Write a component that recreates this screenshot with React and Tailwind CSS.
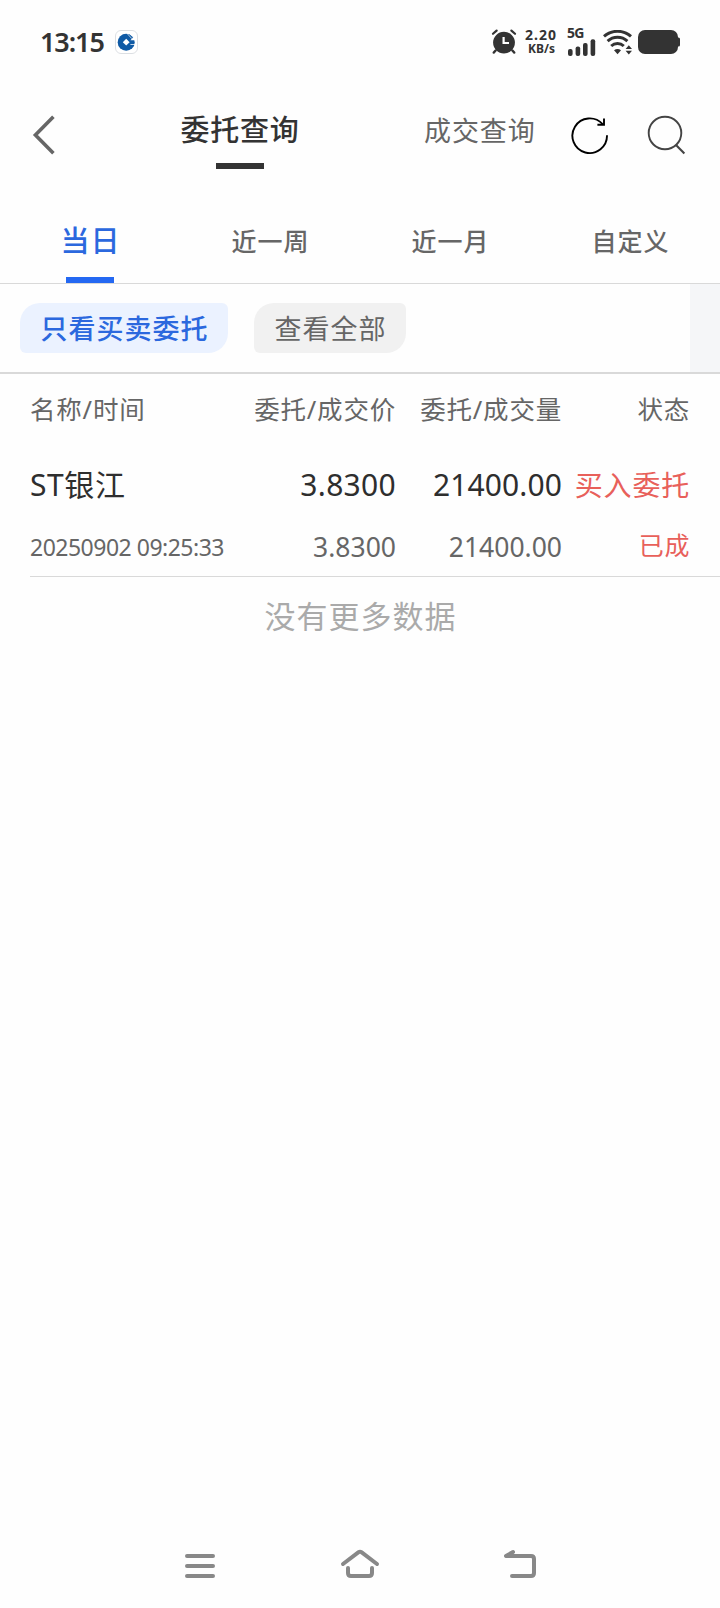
import React from "react";

const tabs = ["当日", "近一周", "近一月", "自定义"];

const orders = [
  {
    id: 1,
    name: "ST银江",
    time: "20250902 09:25:33",
    price: "3.8300",
    dealPrice: "3.8300",
    amount: "21400.00",
    dealAmount: "21400.00",
    type: "买入委托",
    status: "已成",
  },
];

const BankIcon = () => (
  <svg width="24" height="24" viewBox="0 0 24 24" fill="none" className="ml-[11px]">
    <rect x="0.5" y="0.5" width="22" height="23" rx="5.5" fill="#fff" stroke="#dcdfe3" />
    <circle cx="11.2" cy="12.2" r="8.5" fill="#0f5aa5" />
    <path d="M11.2 8.8L14.6 12.2L11.2 15.6L7.8 12.2Z" fill="#fff" />
    <path d="M12 3.4L17 8.8M14.6 3.6L18.6 7.8" stroke="#fff" strokeWidth="0.7" />
    <path d="M15.4 10.2L18.4 7.2L20.6 10.2Z" fill="#fff" />
    <path d="M15 14H20.4L19.8 14.8H15.8Z" fill="#fff" />
  </svg>
);

const AlarmIcon = () => (
  <svg width="26" height="26" viewBox="0 0 26 26" fill="none" stroke="#333" strokeLinecap="round">
    <circle cx="13" cy="13.6" r="10.9" fill="#333" stroke="none" />
    <path d="M2 4.8L5.6 1.6M24 4.8L20.4 1.6" strokeWidth="2.2" />
    <path d="M4.6 21.4L2.8 23.6M21.4 21.4L23.2 23.6" strokeWidth="2.4" />
    <path d="M12.6 8V14H18" stroke="#fff" strokeWidth="2.2" strokeLinecap="butt" />
  </svg>
);

const SignalIcon = () => (
  <svg width="28" height="17" viewBox="0 0 28 17" fill="#333">
    <rect x="0" y="10" width="4.6" height="7" rx="2" />
    <rect x="7.6" y="7.4" width="4.6" height="9.6" rx="2" />
    <rect x="15" y="4" width="4.6" height="13" rx="2" />
    <rect x="22.6" y="0.3" width="4.6" height="16.7" rx="2" />
  </svg>
);

const WifiIcon = () => (
  <svg width="30" height="25" viewBox="0 0 30 25" fill="none" stroke="#333" strokeWidth="3">
    <path d="M1 6.4A20.4 20.4 0 0 1 28 6.4" />
    <path d="M4.6 11.2A14.6 14.6 0 0 1 24.4 11.2" />
    <path d="M8.2 16A9.4 9.4 0 0 1 20.8 16" />
    <path d="M11 20.2Q14.5 17.6 18 20.2L14.5 24.2Z" fill="#333" stroke="none" />
    <path d="M25.8 15.2L29 19H22.6ZM25.8 24.6L29 20.8H22.6Z" fill="#333" stroke="none" />
  </svg>
);

const BatteryIcon = () => (
  <svg width="43" height="24" viewBox="0 0 43 24" fill="#333">
    <rect x="0" y="0" width="40" height="24" rx="7" />
    <rect x="38" y="7.5" width="4" height="9" rx="1.5" />
  </svg>
);

const StatusBar = () => (
  <div className="flex h-[84px] items-center px-10">
    <span className="w-[64px] whitespace-nowrap pb-[2px] text-[27px] font-semibold leading-none tracking-[-1.1px] text-[#333]">
      13:15
    </span>
    <BankIcon />
    <div className="ml-auto flex items-center">
      <AlarmIcon />
      <div className="ml-[7px] flex w-[34px] flex-col items-center font-bold text-[#333]">
        <span className="text-[14px] leading-[14px] tracking-[1px]">2.20</span>
        <span className="pl-px text-[12px] leading-[14px]">KB/s</span>
      </div>
      <div className="ml-[10px] flex w-[28px] flex-col">
        <span className="-ml-px mb-[2px] text-[14px] font-bold leading-[9px] tracking-[-0.8px] text-[#333]">5G</span>
        <SignalIcon />
      </div>
      <div className="ml-[7px]">
        <WifiIcon />
      </div>
      <div className="ml-[5px] -mr-px">
        <BatteryIcon />
      </div>
    </div>
  </div>
);

const Header = () => (
  <div className="flex h-[110px] items-start">
    <button aria-label="返回" className="ml-8 mt-[31px]">
      <svg width="24" height="40" viewBox="0 0 24 40" fill="none" stroke="#666" strokeWidth="3.6">
        <path d="M21.4 1.8L3.4 20L21.4 38.2" />
      </svg>
    </button>
    <div className="-mr-[2px] ml-[64px] mt-[26px] flex w-[240px] flex-col items-center">
      <span className="text-[29px] font-medium leading-10 tracking-[0.8px] text-[#333]">委托查询</span>
      <span className="mt-[13px] h-[6px] w-12 bg-[#333]" />
    </div>
    <div className="ml-[66px] mt-[27px] w-[112px] whitespace-nowrap text-[27px] leading-10 tracking-[0.9px] text-[#666]">
      成交查询
    </div>
    <button aria-label="刷新" className="ml-[35px] mt-[32px]">
      <svg width="40" height="40" viewBox="0 0 40 40" fill="none" stroke="#000" strokeWidth="1.9">
        <path d="M36 19.2A17.3 17.3 0 1 1 31.6 8.2" />
        <path d="M33 2.4V8.8H26.4" />
      </svg>
    </button>
    <button aria-label="搜索" className="ml-[36px] mt-[31px]">
      <svg width="40" height="40" viewBox="0 0 40 40" fill="none" stroke="#444" strokeWidth="1.9">
        <circle cx="18" cy="18" r="16.3" />
        <path d="M29 30L37.4 38.6" strokeWidth="2.1" />
      </svg>
    </button>
  </div>
);

const Tabs = () => (
  <div className="grid h-[90px] grid-cols-4 border-b border-[#d9d9d9]">
    {tabs.map((tab, i) =>
      i === 0 ? (
        <div key={tab} className="flex flex-col items-center justify-end">
          <span className="pl-px text-[29px] font-medium leading-10 tracking-[1px] text-[#2b68de]">{tab}</span>
          <span className="mt-[16px] h-[6px] w-12 bg-[#2468f2]" />
        </div>
      ) : (
        <div
          key={tab}
          className="pl-px pt-[27px] text-center text-[25px] font-medium leading-10 tracking-[1px] text-[#666]"
        >
          {tab}
        </div>
      )
    )}
  </div>
);

const Filters = () => (
  <div className="flex h-[90px] border-b-2 border-[#d9d9d9]">
    <div className="flex flex-1 items-center gap-[26px] pl-5">
      <button className="h-[50px] w-[208px] rounded-[6px] rounded-tl-[20px] rounded-br-[20px] bg-[#ebf2ff] pl-px pt-[3px] text-[27px] font-medium tracking-[1px] text-[#2b68de]">
        只看买卖委托
      </button>
      <button className="h-[50px] w-[152px] rounded-[6px] rounded-tl-[20px] rounded-br-[20px] bg-[#f1f1f1] pl-px pt-[3px] text-[27px] tracking-[1px] text-[#666]">
        查看全部
      </button>
    </div>
    <div className="w-[30px] bg-[#f5f6f8]" />
  </div>
);

const OrderTable = () => (
  <div>
    <div className="grid h-[72px] grid-cols-[200px_166px_166px_128px] pl-[30px] text-right text-[25.5px] leading-[70px] tracking-[0.8px] text-[#666]">
      <span className="text-left">名称/时间</span>
      <span>委托/成交价</span>
      <span>委托/成交量</span>
      <span>状态</span>
    </div>
    {orders.map((order) => (
      <div key={order.id} className="ml-[30px] h-[131px] border-b border-[#d9d9d9] pt-[19px]">
        <div className="grid grid-cols-[200px_166px_166px_128px] text-right text-[30px] leading-10 text-[#2e2e2e]">
          <span className="text-left tracking-[0.6px]">{order.name}</span>
          <span className="tracking-[0.3px]">{order.price}</span>
          <span className="tracking-[0.1px]">{order.amount}</span>
          <span className="text-[28px] tracking-[0.8px] text-[#e8605a]">{order.type}</span>
        </div>
        <div className="mt-[22px] grid grid-cols-[200px_166px_166px_128px] text-right text-[26.5px] leading-10 text-[#666]">
          <span className="whitespace-nowrap text-left text-[23px] tracking-[-0.5px]">{order.time}</span>
          <span>{order.dealPrice}</span>
          <span>{order.dealAmount}</span>
          <span className="-mt-[2px] text-[25px] tracking-[0.6px] text-[#e8605a]">{order.status}</span>
        </div>
      </div>
    ))}
    <p className="pl-px pt-[19px] text-center text-[31px] leading-10 tracking-[1px] text-[#aaa]">没有更多数据</p>
  </div>
);

const NavBar = () => (
  <div className="mt-auto flex h-[84px] items-center justify-center gap-[120px] text-[#888]">
    <svg width="40" height="40" viewBox="0 0 40 40" fill="none" stroke="currentColor" strokeWidth="4" strokeLinecap="round">
      <path d="M7 10H33M7 20H33M7 30H33" />
    </svg>
    <svg width="40" height="40" viewBox="0 0 40 40" fill="none" stroke="currentColor" strokeWidth="4" strokeLinecap="round" strokeLinejoin="round">
      <path d="M3 18L18.6 6.2Q20 5.2 21.4 6.2L37 18" />
      <path d="M8 22V27Q8 30 11 30H29Q32 30 32 27V22" />
    </svg>
    <svg width="40" height="40" viewBox="0 0 40 40" fill="none" stroke="currentColor" strokeWidth="4" strokeLinecap="round" strokeLinejoin="round">
      <path d="M13 6L6 10H31Q34 10 34 13V27Q34 30 31 30H12" />
    </svg>
  </div>
);

export default function App() {
  return (
    <div className="flex h-[1608px] w-[720px] flex-col overflow-hidden bg-[#fefefe] font-['Noto_Sans','Noto_Sans_CJK_SC',sans-serif]">
      <StatusBar />
      <Header />
      <Tabs />
      <Filters />
      <OrderTable />
      <NavBar />
    </div>
  );
}
